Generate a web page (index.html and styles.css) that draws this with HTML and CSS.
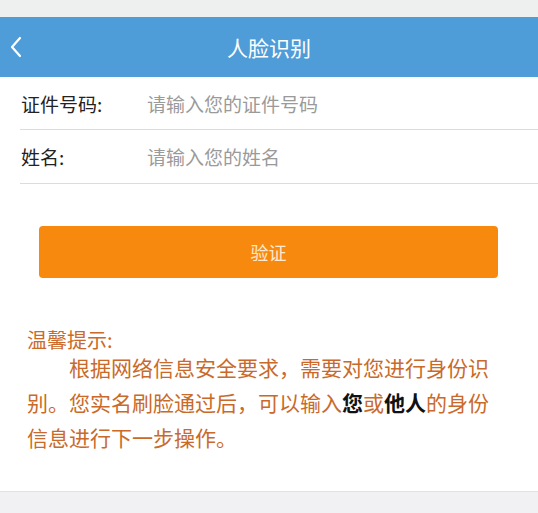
FILE: index.html
```html
<!DOCTYPE html>
<html lang="zh">
<head>
<meta charset="utf-8">
<title>人脸识别</title>
<link rel="stylesheet" href="styles.css">
</head>
<body>
<div class="page">
  <div class="statusbar"></div>
  <header class="header">
    <svg class="back" width="14" height="22" viewBox="0 0 14 22"><polyline points="11,2 3,11 11,20" fill="none" stroke="#ffffff" stroke-width="2.2" stroke-linecap="round" stroke-linejoin="round"/></svg>
    <h1 class="title">人脸识别</h1>
  </header>
  <div class="form">
    <div class="row row-first">
      <span class="label">证件号码:</span>
      <span class="placeholder">请输入您的证件号码</span>
    </div>
    <div class="row">
      <span class="label">姓名:</span>
      <span class="placeholder">请输入您的姓名</span>
    </div>
  </div>
  <div class="btn-wrap">
    <button class="btn">验证</button>
  </div>
  <div class="tips">
    <div class="tips-title">温馨提示:</div>
    <p class="tips-body">根据网络信息安全要求，需要对您进行身份识别。您实名刷脸通过后，可以输入<b>您</b>或<b>他人</b>的身份信息进行下一步操作。</p>
  </div>
  <div class="footer"></div>
</div>
</body>
</html>
```
FILE: styles.css
```css
html, body {
  margin: 0;
  padding: 0;
  background: #ffffff;
}
.page {
  width: 538px;
  height: 513px;
  display: flex;
  flex-direction: column;
  font-family: "Noto Sans CJK SC", "Noto Sans", sans-serif;
  overflow: hidden;
}
.statusbar {
  height: 17px;
  background: #eeefef;
}
.header {
  position: relative;
  height: 60px;
  background: #4f9dd8;
  display: flex;
  align-items: center;
  justify-content: center;
}
.back {
  position: absolute;
  left: 9px;
  top: 19px;
}
.title {
  margin: 0;
  font-size: 21px;
  font-weight: 400;
  color: #ffffff;
}
.form {
  padding-left: 20px;
}
.row {
  height: 53px;
  border-bottom: 1px solid #dcdcdc;
  display: flex;
  align-items: center;
  font-size: 19px;
}
.row-first {
  height: 52px;
}
.label {
  width: 126px;
  padding-left: 1px;
  color: #222222;
}
.placeholder {
  color: #9a9a9a;
}
.btn-wrap {
  padding: 42px 40px 0 39px;
}
.btn {
  display: block;
  width: 459px;
  height: 52px;
  border: none;
  border-radius: 4px;
  background: #f7890f;
  color: #fdebd0;
  font-family: inherit;
  font-size: 18px;
}
.tips {
  margin: 51px 0 0 27px;
  width: 470px;
  color: #c96a2b;
  font-size: 21px;
  font-weight: 400;
  line-height: 35px;
}
.tips-title {
  font-size: 20px;
  line-height: 21px;
}
.tips-body {
  margin: 0;
  text-indent: 2em;
}
.tips-body b {
  color: #111111;
  font-weight: 700;
}
.footer {
  margin-top: auto;
  height: 21px;
  background: #f1f1f3;
  border-top: 1px solid #e2e2e2;
}
```
